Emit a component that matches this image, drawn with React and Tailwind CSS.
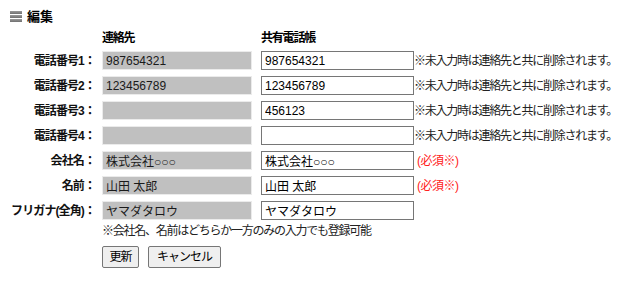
import React from 'react';

const font = { fontFamily: '"Liberation Sans", "Noto Sans CJK JP", sans-serif' };

const rows = [
  { label: '電話番号1：', contact: '987654321', share: '987654321', note: 'delete' },
  { label: '電話番号2：', contact: '123456789', share: '123456789', note: 'delete' },
  { label: '電話番号3：', contact: '', share: '456123', note: 'delete' },
  { label: '電話番号4：', contact: '', share: '', note: 'delete' },
  { label: '会社名：', contact: '株式会社○○○', share: '株式会社○○○', note: 'required' },
  { label: '名前：', contact: '山田 太郎', share: '山田 太郎', note: 'required' },
  { label: 'フリガナ(全角)：', contact: 'ヤマダタロウ', share: 'ヤマダタロウ', note: null },
];

function MenuIcon() {
  return (
    <div className="flex flex-col gap-[1px] w-[12px]">
      <div className="h-[3px] bg-gradient-to-b from-[#9a9a9a] to-[#6f6f6f]" />
      <div className="h-[3px] bg-gradient-to-b from-[#9a9a9a] to-[#6f6f6f]" />
      <div className="h-[3px] bg-gradient-to-b from-[#9a9a9a] to-[#6f6f6f]" />
    </div>
  );
}

function Row({ row }) {
  return (
    <div className="flex items-center h-[19px]">
      <div className="w-[95px] text-right text-[12px] font-bold tracking-[-0.9px] text-[#111] leading-none whitespace-nowrap">
        {row.label}
      </div>
      <input
        readOnly
        defaultValue={row.contact}
        className="ml-[7px] w-[150px] h-[19px] bg-[#c0c0c0] border border-[#ebebeb] px-[3px] text-[12px] text-[#1a1a1a] outline-none"
        style={font}
      />
      <input
        defaultValue={row.share}
        className="ml-[9px] w-[153px] h-[19px] bg-white border border-[#767676] px-[3px] text-[12px] text-black outline-none"
        style={font}
      />
      {row.note === 'delete' && (
        <span className="text-[12px] tracking-[-1.25px] text-[#222] whitespace-nowrap leading-none">
          ※未入力時は連絡先と共に削除されます。
        </span>
      )}
      {row.note === 'required' && (
        <span className="ml-[3px] text-[12px] tracking-[-0.5px] text-[#ff2020] whitespace-nowrap leading-none">
          (必須※)
        </span>
      )}
    </div>
  );
}

export default function App() {
  return (
    <div className="w-[627px] h-[287px] bg-white text-black" style={font}>
      <div className="flex items-center gap-[5px] pl-[10px] pt-[9px] h-[23px]">
        <MenuIcon />
        <span className="text-[13px] font-bold leading-none">編集</span>
      </div>

      <div className="flex mt-[9px] text-[12px] font-bold tracking-[-1.2px] leading-none">
        <div className="w-[102px]" />
        <div className="w-[159px]">連絡先</div>
        <div>共有電話帳</div>
      </div>

      <div className="flex flex-col gap-[6px] mt-[7px]">
        {rows.map((row) => (
          <Row key={row.label} row={row} />
        ))}
      </div>

      <div className="pl-[102px] mt-[5px] text-[12px] tracking-[-1.25px] text-[#222] leading-none">
        ※会社名、名前はどちらか一方のみの入力でも登録可能
      </div>

      <div className="flex gap-[9px] pl-[102px] mt-[9px]">
        <button className="w-[37px] h-[22px] bg-[#efefef] border border-[#767676] rounded-[2px] text-[12px] tracking-[-1px] leading-none">
          更新
        </button>
        <button className="w-[73px] h-[22px] bg-[#efefef] border border-[#767676] rounded-[2px] text-[12px] tracking-[-1px] leading-none">
          キャンセル
        </button>
      </div>
    </div>
  );
}
